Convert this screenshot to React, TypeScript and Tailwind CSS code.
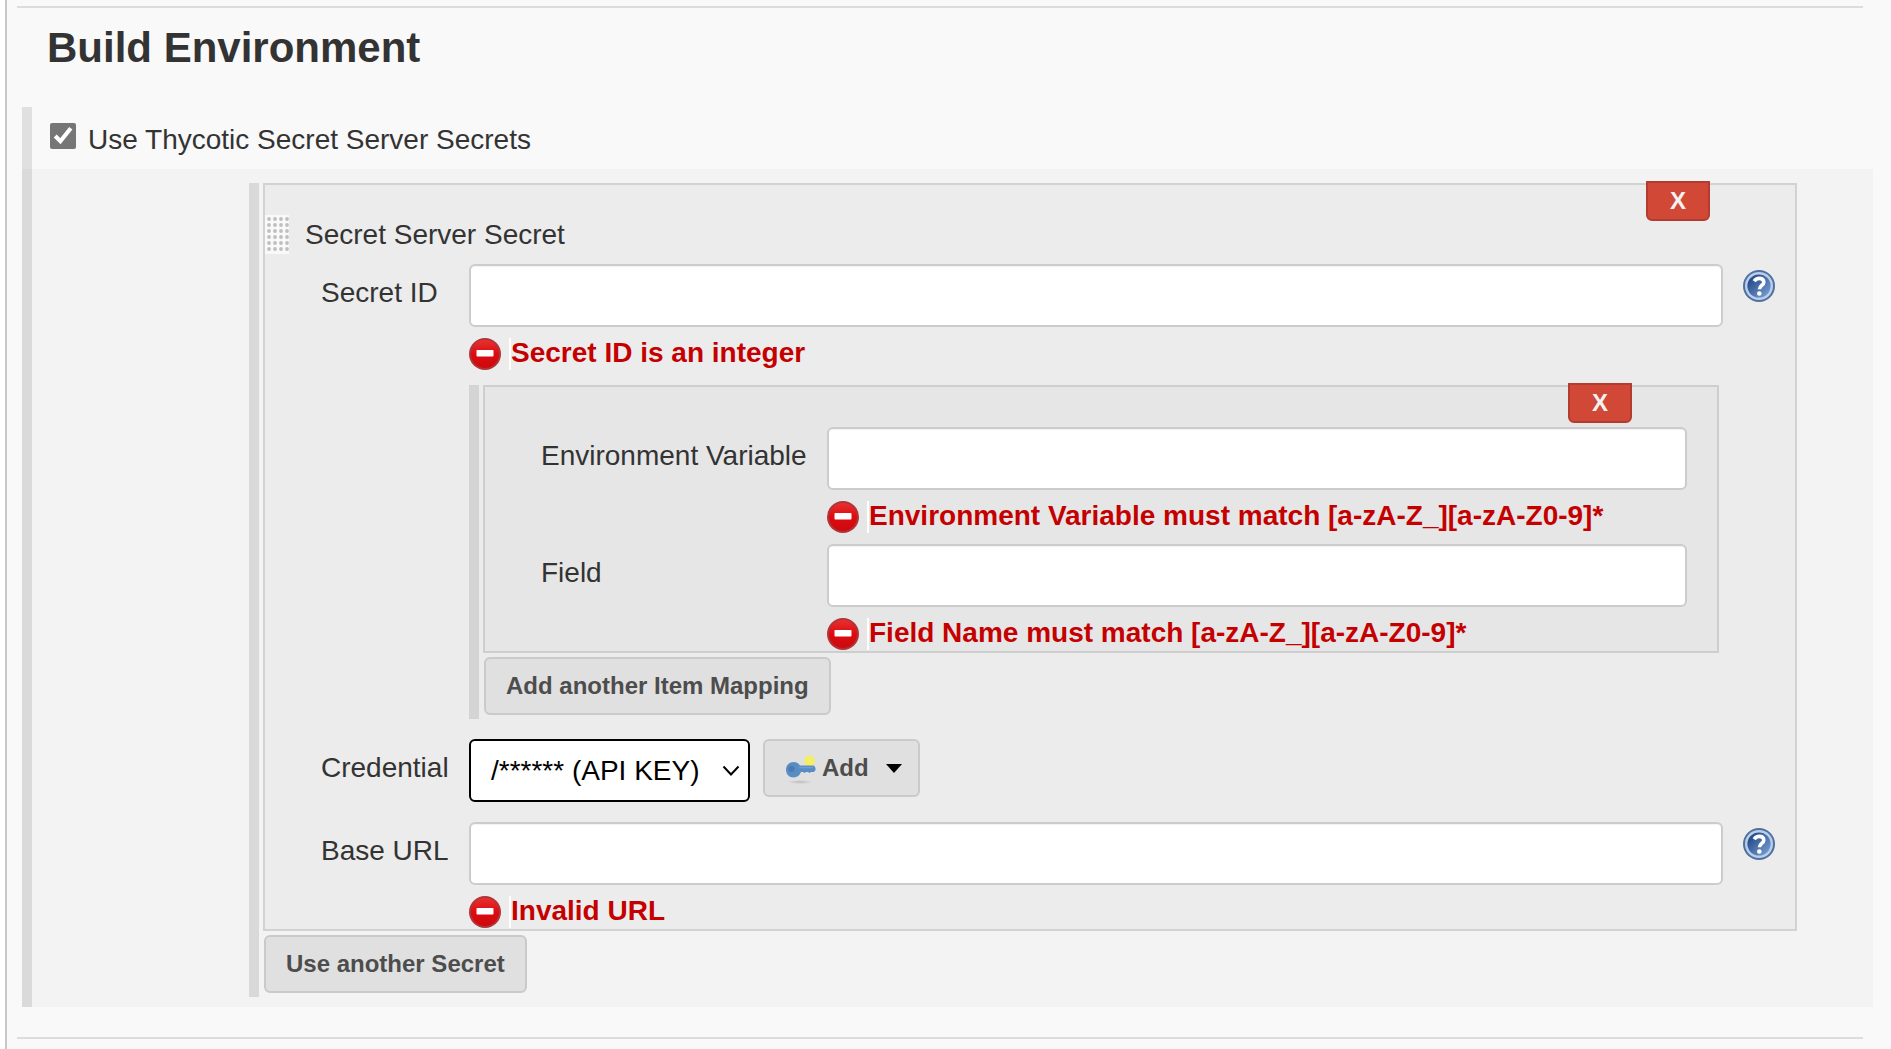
import type { ReactNode } from 'react';

function HelpIcon() {
  return (
    <svg viewBox="0 0 32 32" className="size-8" aria-hidden="true">
      <defs>
        <linearGradient id="helpFill" x1="0" y1="0" x2="1" y2="1">
          <stop offset="0.2" stopColor="#2a4f8e" />
          <stop offset="1" stopColor="#7fa6d8" />
        </linearGradient>
      </defs>
      <circle cx="16" cy="16" r="16" fill="#50719f" />
      <circle cx="16" cy="16" r="14" fill="#b9cfeb" />
      <circle cx="16" cy="16" r="11.6" fill="url(#helpFill)" />
      <path d="M11.2 11.2c1.2-2 3-2.8 5-2.8 2.8 0 4.6 1.4 4.6 3.8 0 3.2-4.3 3.4-4.3 7" fill="none" stroke="#fff" strokeWidth="3.6" />
      <circle cx="16.3" cy="23.5" r="2.3" fill="#fff" />
    </svg>
  );
}

function ErrorIcon() {
  return (
    <svg viewBox="0 0 32 32" className="size-8 shrink-0" aria-hidden="true">
      <defs>
        <linearGradient id="errorFill" x1="0" y1="0" x2="0" y2="1">
          <stop offset="0" stopColor="#e83030" />
          <stop offset="0.5" stopColor="#dc0c10" />
          <stop offset="1" stopColor="#cc0a0e" />
        </linearGradient>
      </defs>
      <circle cx="16" cy="16" r="16" fill="#b03438" />
      <circle cx="16" cy="16" r="14" fill="url(#errorFill)" />
      <rect x="7.5" y="12" width="17" height="6.5" rx="0.8" fill="#fff" />
    </svg>
  );
}

function KeyIcon() {
  return (
    <svg viewBox="0 0 32 32" className="size-8" aria-hidden="true">
      <defs>
        <radialGradient id="keyShadow">
          <stop offset="0" stopColor="#bcbcbc" />
          <stop offset="1" stopColor="#e0e0e0" />
        </radialGradient>
      </defs>
      <ellipse cx="15" cy="30" rx="13" ry="2" fill="url(#keyShadow)" />
      <circle cx="24.5" cy="9" r="6" fill="#e9e5a8" />
      <circle cx="24.5" cy="9" r="4.6" fill="#f6f05c" />
      <path d="M8.500 10c3.200 0 5 1.200 6.500 3.500H29l1.500 2.500v2l-1.500 2h-3l-1.500 1-1.500-1h-2l-1.500 1-1.500-1h-2c-1.200 3.200-3.700 5.500-7.500 5.500-4.300 0-7.500-3.200-7.500-7.700S4.200 10 8.500 10z" fill="#5a8cc4" />
      <circle cx="6.500" cy="17" r="3" fill="#4a7ab4" />
      <path d="M14 15.500h14" stroke="#739cce" strokeWidth="1.500" />
    </svg>
  );
}

function DragHandle() {
  return (
    <svg viewBox="0 0 24 40" className="h-10 w-6" aria-hidden="true">
      <defs>
        <pattern id="gripDots" width="6" height="6" patternUnits="userSpaceOnUse">
          <circle cx="4" cy="4" r="1.9" fill="#bfbfbf" />
        </pattern>
      </defs>
      <rect width="24" height="39" fill="#f9f9f9" />
      <rect width="24" height="36" fill="url(#gripDots)" />
    </svg>
  );
}

function DeleteButton({ label }: { label: string }) {
  return (
    <button
      type="button"
      aria-label={label}
      className="absolute -top-1 right-[85px] h-10 w-16 rounded-b-md border-2 border-[#b33c30] bg-[#d14836] text-2xl leading-8 font-bold text-[#f2f2f2]"
    >
      X
    </button>
  );
}

function GreyButton({ children }: { children: ReactNode }) {
  return (
    <button
      type="button"
      className="flex h-[58px] items-center rounded-md border-2 border-[#cacaca] bg-[#e0e0e0] px-5 text-2xl font-bold whitespace-nowrap text-[#4d4d4d]"
    >
      {children}
    </button>
  );
}

function FieldRow({ id, label, wide, children }: { id: string; label: string; wide?: boolean; children: ReactNode }) {
  return (
    <div className="flex items-start">
      <label htmlFor={id} className={wide ? 'mt-[13px] w-[286px] shrink-0' : 'mt-[13px] w-[148px] shrink-0'}>
        {label}
      </label>
      {children}
    </div>
  );
}

function TextField({ id, error }: { id: string; error: string }) {
  return (
    <div className="min-w-0 flex-1">
      <input
        id={id}
        type="text"
        aria-describedby={id + '-error'}
        className="block h-[63px] w-full rounded-md border-2 border-[#cccccc] bg-white px-4 inset-shadow-xs"
      />
      <div className="mt-[11px] flex gap-2">
        <ErrorIcon />
        <strong id={id + '-error'} className="border-l-2 border-white leading-[30px] font-bold text-[#c40000]">
          {error}
        </strong>
      </div>
    </div>
  );
}

function HelpButton({ label }: { label: string }) {
  return (
    <button type="button" aria-label={label} className="mt-1.5 mr-5 ml-5 shrink-0">
      <HelpIcon />
    </button>
  );
}

function ItemMapping() {
  return (
    <div className="mt-[15px] mr-[76px] ml-[204px] border-l-[10px] border-[#d4d4d4] pb-1 pl-1">
      <div className="relative flex flex-col gap-[11px] border-2 border-[#cecece] bg-[#e6e6e6] pt-10 pr-[30px] pb-px pl-14">
        <DeleteButton label="Delete item mapping" />
        <FieldRow id="env" label="Environment Variable" wide>
          <TextField id="env" error="Environment Variable must match [a-zA-Z_][a-zA-Z0-9]*" />
        </FieldRow>
        <FieldRow id="field" label="Field" wide>
          <TextField id="field" error="Field Name must match [a-zA-Z_][a-zA-Z0-9]*" />
        </FieldRow>
      </div>
      <div className="mt-1 ml-px flex">
        <GreyButton>Add another Item Mapping</GreyButton>
      </div>
    </div>
  );
}

function SecretPanel() {
  return (
    <div className="relative border-2 border-[#d2d2d2] bg-[#ececec] pt-[30px] pb-px">
      <DeleteButton label="Delete secret" />
      <div className="flex items-center gap-4">
        <DragHandle />
        <span>Secret Server Secret</span>
      </div>
      <div className="mt-[9px] pl-14">
        <FieldRow id="secret-id" label="Secret ID">
          <TextField id="secret-id" error="Secret ID is an integer" />
          <HelpButton label="Help for Secret ID" />
        </FieldRow>
      </div>
      <ItemMapping />
      <div className="mt-5 pl-14">
        <FieldRow id="credential" label="Credential">
          <div className="relative">
            <select
              id="credential"
              className="block h-[63px] w-[281px] appearance-none rounded-md border-2 border-black bg-white pr-12 pl-5 text-black"
            >
              <option>/****** (API KEY)</option>
            </select>
            <svg viewBox="0 0 18 12" className="pointer-events-none absolute top-[26px] right-2.5 h-3 w-[18px]" aria-hidden="true">
              <path d="M1.5 1.5 9 9.5l7.500-8" fill="none" stroke="#000" strokeWidth="2" />
            </svg>
          </div>
          <div className="ml-[13px] flex">
            <GreyButton>
              <KeyIcon />
              <span className="ml-[5px]">Add</span>
              <svg viewBox="0 0 16 9" className="-mr-1 ml-[17px] h-[9px] w-4" aria-hidden="true">
                <path d="M0 0h16L8 9z" fill="#000" />
              </svg>
            </GreyButton>
          </div>
        </FieldRow>
      </div>
      <div className="mt-5 pl-14">
        <FieldRow id="base-url" label="Base URL">
          <TextField id="base-url" error="Invalid URL" />
          <HelpButton label="Help for Base URL" />
        </FieldRow>
      </div>
    </div>
  );
}

export default function App() {
  return (
    <div className="bg-white pl-[5px] font-['Liberation_Sans',Arial,sans-serif] text-[28px] leading-8 text-[#333333]">
      <main className="min-h-screen border-l-2 border-[#c8c8c8] bg-[#f9f9f9] pt-1.5">
        <hr className="mr-7 ml-2.5 border-t-2 border-[#dcdcdc]" />
        <h1 className="mt-4 ml-10 text-[42px] leading-[48px] font-bold">Build Environment</h1>
        <section className="mt-[35px] mr-[18px] ml-[15px]">
          <div className="flex h-[62px] items-start gap-3 border-l-[10px] border-[#e0e0e0] pt-4 pl-[18px]">
            <input id="use-secrets" type="checkbox" defaultChecked className="size-[26px] accent-[#767676]" />
            <label htmlFor="use-secrets" className="leading-[34px]">Use Thycotic Secret Server Secrets</label>
          </div>
          <div className="border-l-[10px] border-[#dadada] bg-[#f3f3f3] pt-3.5 pr-[76px] pb-2.5 pl-[217px]">
            <div className="border-l-[10px] border-[#d9d9d9] pb-1 pl-1">
              <SecretPanel />
              <div className="mt-1 ml-px flex">
                <GreyButton>Use another Secret</GreyButton>
              </div>
            </div>
          </div>
        </section>
        <hr className="mt-[30px] mr-7 ml-2.5 border-t-2 border-[#dcdcdc]" />
      </main>
    </div>
  );
}
